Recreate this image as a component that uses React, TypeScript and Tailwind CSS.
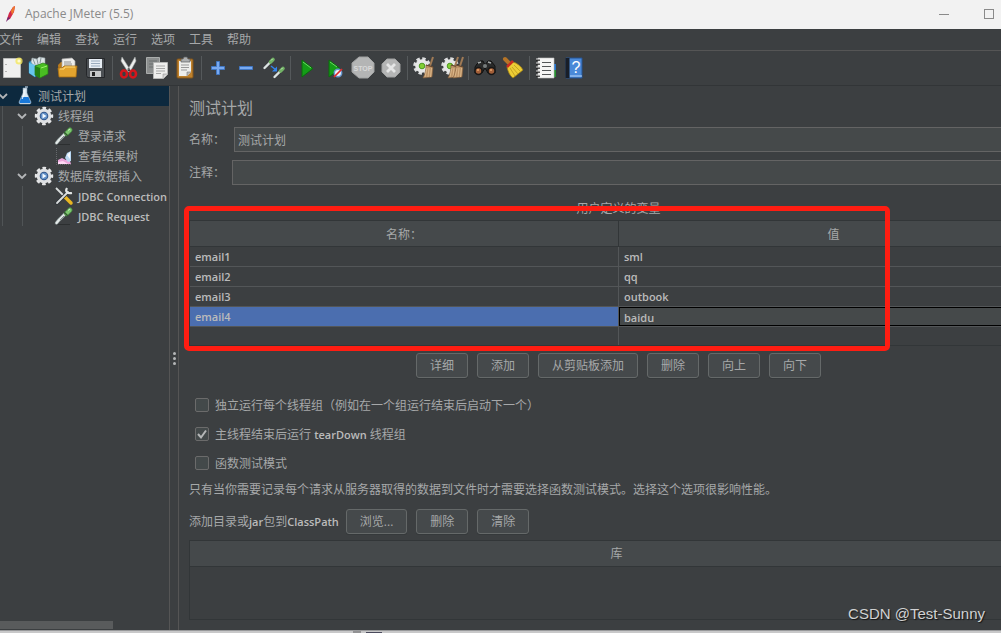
import React, { useState } from "react";

interface IconProps {
  children: React.ReactNode;
  size?: "sm" | "md";
}

function Icon({ children, size = "md" }: IconProps) {
  return size === "md" ? (
    <svg viewBox="0 0 24 24" className="w-6 h-6 shrink-0" fill="none">{children}</svg>
  ) : (
    <svg viewBox="0 0 20 20" className="w-5 h-5 shrink-0" fill="none">{children}</svg>
  );
}

/* Shared drawings */
function Pipette() {
  return (
    <>
      <path d="M3 18.500h13" stroke="#2c2f30" />
      <path d="M2.500 17l2.500-3L12 7" stroke="#8f9a9a" strokeWidth="3.400" strokeLinecap="round" />
      <path d="M2.500 17l2.500-3L12 7" stroke="#e3e9e8" strokeWidth="2" strokeLinecap="round" />
      <path d="M6 14l4-4" stroke="#7f8a89" />
      <path d="M12.500 7.500L16 4" stroke="#4b8f43" strokeWidth="5" strokeLinecap="round" />
      <path d="M12.500 7.500L16 4" stroke="#7cc66f" strokeWidth="3.200" strokeLinecap="round" />
      <path d="M10 6l4 4" stroke="#335a31" strokeWidth="1.200" />
      <path d="M14 4.500l2-1.500" stroke="#c8f0bf" />
    </>
  );
}

function Gear() {
  return (
    <>
      <circle cx="10" cy="10" r="7.500" stroke="#e4e5e6" strokeWidth="3.400" strokeDasharray="3.400 2.490" strokeDashoffset="1.700" />
      <circle cx="10" cy="10" r="7.300" fill="#dfe1e3" />
      <circle cx="10" cy="10" r="4.300" fill="#34588a" />
      <circle cx="10" cy="10" r="3.300" fill="#5f8ec6" />
      <path d="M8.500 7.500l4 2.500-4 2.500z" fill="#f2f8ff" />
    </>
  );
}

function Broom({ x = 0 }: { x?: number }) {
  return (
    <g transform={`translate(${x} 0)`}>
      <path d="M21 1l-3 9" stroke="#a07a55" strokeWidth="2" />
      <path d="M14 9l7 2-1 10-9 1c2-4 3-8 3-13z" fill="#bd9367" stroke="#7e5c3c" strokeWidth=".6" />
      <path d="M15 12l-2 9M17 12l-1 9M19.500 12l-1 9" stroke="#e2bf92" strokeWidth=".8" />
      <path d="M14 9l7 2" stroke="#62452d" />
    </g>
  );
}

function SmallGear() {
  return (
    <>
      <circle cx="10" cy="10" r="7" stroke="#dedfe0" strokeWidth="3.600" strokeDasharray="3.200 2.298" />
      <circle cx="10" cy="10" r="6.800" fill="#e6e7e7" />
      <circle cx="10" cy="10" r="2.800" fill="#82cf35" stroke="#4d9a21" />
    </>
  );
}

const toolGroups = [
  [
    {
      label: "新建",
      icon: (
        <>
          <path d="M3.500 2.500h17v19h-17z" fill="#f0f0ef" stroke="#b9bab9" />
          <path d="M6 8v1M6 15v1" stroke="#777" />
          <circle cx="19" cy="5" r="3.600" fill="#f5e95c" opacity=".8" />
          <circle cx="19" cy="5" r="1.600" fill="#fffbd0" />
        </>
      ),
    },
    {
      label: "模板",
      icon: (
        <>
          <path d="M1 6l6-3 4 3v12l-4 3-6-4z" fill="#3fa6d8" stroke="#1c6f9d" strokeWidth=".7" />
          <path d="M3 6l1-4 5 1 2-2 6 1v7H5z" fill="#dce4e6" stroke="#8a9699" strokeWidth=".6" />
          <path d="M5 3l2 5M9 3l1 5M13 2l-1 5" stroke="#88979b" />
          <path d="M1 7l6 2v12l-6-4z" fill="#68c5ed" />
          <path d="M7 10l8-3 5 2v9l-8 4-5-3z" fill="#49bd22" stroke="#237c12" strokeWidth=".7" />
          <path d="M7 10l5 2v10l-5-3z" fill="#247f14" />
          <path d="M13 12l6-2" stroke="#9df06d" />
        </>
      ),
    },
    {
      label: "打开",
      icon: (
        <>
          <path d="M2 9l3-3h4v13H3z" fill="#ba7b1d" />
          <path d="M6 3l10-1 3 3v10H6z" fill="#eeeeec" stroke="#aaa" strokeWidth=".7" />
          <path d="M8 6h7M8 8h8M8 10h8" stroke="#777" strokeWidth=".8" />
          <path d="M2 12h4l2-2h13l-1 11H3z" fill="#e3a42e" stroke="#a76d12" strokeWidth=".8" />
          <path d="M4 13h4l1-2h10" stroke="#ffdb7b" />
        </>
      ),
    },
    {
      label: "保存",
      icon: (
        <>
          <path d="M2.500 2.500h18v19h-17l-1-2z" fill="#4c5054" stroke="#25272a" />
          <path d="M5 3h13v9H5z" fill="#e7edf4" />
          <path d="M7 5h9M7 7.500h9M7 10h9" stroke="#8799ae" strokeWidth=".8" />
          <path d="M6 15h11v6H6z" fill="#c6c8c9" />
          <path d="M8 16h3v4H8z" fill="#222" />
        </>
      ),
    },
  ],
  [
    {
      label: "剪切",
      icon: (
        <>
          <path d="M5 1l9 14-3 1L4 5zM18 1l-8 14 3 1 6-11z" fill="#eceeed" stroke="#9fa3a3" strokeWidth=".6" />
          <circle cx="11.500" cy="13" r="1" fill="#666" />
          <ellipse cx="7" cy="18" rx="3" ry="3.500" stroke="#d4161c" strokeWidth="2.600" />
          <ellipse cx="16" cy="18" rx="3" ry="3.500" stroke="#d4161c" strokeWidth="2.600" />
        </>
      ),
    },
    {
      label: "复制",
      icon: (
        <>
          <path d="M1.500 1.500h13v16h-13z" fill="#8b8e8e" stroke="#aaadac" />
          <path d="M4 5h8M4 8h8M4 11h8" stroke="#6c7070" />
          <path d="M8.500 6.500h14v12l-4 4h-10z" fill="#eeeeed" stroke="#b5b6b5" />
          <path d="M11 10h9M11 12.500h9M11 15h9M11 17.500h5" stroke="#a6a7a6" />
          <path d="M18 22v-4h4" fill="#cfcfcf" stroke="#999" strokeWidth=".6" />
        </>
      ),
    },
    {
      label: "粘贴",
      icon: (
        <>
          <rect x="4" y="3" width="16" height="19" rx="1" fill="#be812c" stroke="#82551a" />
          <path d="M6 5h12v11l-4 4H6z" fill="#eeeeec" />
          <path d="M8 9h8M8 11.500h8M8 14h6" stroke="#999" />
          <path d="M14 20v-4h4" fill="#bbb" stroke="#777" strokeWidth=".6" />
          <path d="M8 6V3h2l1-2h3l1 2h2v3z" fill="#aeb0b1" stroke="#595c5e" strokeWidth=".7" />
        </>
      ),
    },
  ],
  [
    {
      label: "展开",
      icon: <path d="M10.500 5.500h3v5h5v3h-5v5h-3v-5h-5v-3h5z" fill="#79aaf0" stroke="#4177c3" />,
    },
    {
      label: "折叠",
      icon: <path d="M5.500 10.500h13v3h-13z" fill="#79aaf0" stroke="#4177c3" />,
    },
    {
      label: "切换",
      icon: (
        <>
          <path d="M2.500 12L8 6.500M12.500 21L18 15.500" stroke="#dce4e2" strokeWidth="2.400" strokeLinecap="round" />
          <path d="M8.500 6L11 3.500M18.500 15L21 12.500" stroke="#72b266" strokeWidth="3.600" strokeLinecap="round" />
          <path d="M9 4.500l1.500-1.500M19 13.500l1.500-1.500" stroke="#c4edbb" />
          <path d="M9 10l5 4" stroke="#3384ed" strokeWidth="1.500" />
          <path d="M15 10.500v5h-5z" fill="#3384ed" />
        </>
      ),
    },
  ],
  [
    {
      label: "启动",
      icon: (
        <>
          <path d="M7 4l11 8.500L7 21z" fill="#149d17" stroke="#0a6c0d" />
          <path d="M8 6l8 6" stroke="#6bd665" />
        </>
      ),
    },
    {
      label: "不停顿开始",
      icon: (
        <>
          <path d="M6 4l11 8.500L6 21z" fill="#149d17" stroke="#0a6c0d" />
          <path d="M7 6l7 5" stroke="#6bd665" />
          <circle cx="15" cy="17" r="3.700" fill="#ecf3fb" stroke="#6898cf" strokeWidth="1.500" />
          <path d="M11 21l8-8" stroke="#df2927" strokeWidth="1.700" />
        </>
      ),
    },
    {
      label: "停止",
      icon: (
        <>
          <path d="M8 1h9l6 6v9l-6 6H8l-7-6V7z" fill="#b4b5b5" stroke="#a0a2a2" />
          <text x="12" y="14.500" textAnchor="middle" fontSize="7" fontWeight="700" fill="#d8d9d9" fontFamily="Liberation Sans, sans-serif">STOP</text>
        </>
      ),
    },
    {
      label: "关闭",
      icon: (
        <>
          <path d="M8 3h8l5 5v8l-5 5H8l-5-5V8z" fill="#b4b5b5" stroke="#a0a2a2" />
          <path d="M8 8l8 8M16 8l-8 8" stroke="#e5e6e6" strokeWidth="2.800" />
        </>
      ),
    },
  ],
  [
    { label: "清除", icon: <><SmallGear /><Broom /></> },
    { label: "清除全部", icon: <><SmallGear /><Broom x={-3} /><Broom x={2} /></> },
  ],
  [
    {
      label: "搜索",
      icon: (
        <>
          <path d="M4 8l3-3h3l2 4 3-4h3l4 5v7h-7l-3-5-3 5H2v-6z" fill="#292a2a" stroke="#111" />
          <path d="M5 7l3-1M15 6l3 1" stroke="#a4a9a9" strokeWidth="1.500" />
          <circle cx="5.500" cy="15" r="3.500" fill="#a35f38" stroke="#171717" strokeWidth="1.500" />
          <circle cx="18.500" cy="15" r="3.500" fill="#a35f38" stroke="#171717" strokeWidth="1.500" />
          <path d="M4 14h2M17 14h2" stroke="#e8a66d" strokeWidth="1.500" />
          <circle cx="12" cy="10" r="2" fill="#777c7c" />
        </>
      ),
    },
    {
      label: "重置搜索",
      icon: (
        <>
          <path d="M4 3l4 4" stroke="#b57427" strokeWidth="4" strokeLinecap="round" />
          <path d="M6 11l6-5c4 1 8 4 10 8l-10 8c-3-2-5-6-6-11z" fill="#eccd35" stroke="#9e7d16" strokeWidth=".8" />
          <path d="M9 12l5 8M11 11l6 7M13 9l6 6" stroke="#c5a323" />
          <path d="M6 11l6-6" stroke="#c92c21" strokeWidth="2.600" />
        </>
      ),
    },
  ],
  [
    {
      label: "函数助手",
      icon: (
        <>
          <path d="M19 8h3v6h-3z" fill="#2472c9" />
          <path d="M19 14h3v7h-3z" fill="#279031" />
          <path d="M4 2h16v20H4z" fill="#f5f5f4" stroke="#c0c0c0" strokeWidth=".6" />
          <path d="M8 6.500h9M8 10.500h9M8 14.500h9M8 18.500h9" stroke="#535657" />
          <path d="M2 4h4M2 8h4M2 12h4M2 16h4M2 20h4" stroke="#222" strokeWidth="1.500" />
          <path d="M2 3h4M2 7h4M2 11h4M2 15h4M2 19h4" stroke="#ddd" />
        </>
      ),
    },
    {
      label: "帮助",
      icon: (
        <>
          <path d="M4 2h16v20H4z" fill="#4a89d8" stroke="#245391" />
          <path d="M3.500 2h4v20h-4z" fill="#181e28" />
          <path d="M8 20h12" stroke="#bad7fa" />
          <text x="14" y="17" textAnchor="middle" fontSize="16" fill="#fff" fontFamily="Liberation Sans, sans-serif">?</text>
        </>
      ),
    },
  ],
];

function Chevron() {
  return (
    <svg viewBox="0 0 12 12" className="w-3 h-3 shrink-0" fill="none">
      <path d="M2 4l4 4 4-4" stroke="#b4b6b8" strokeWidth="1.800" />
    </svg>
  );
}

interface LeafProps {
  icon: React.ReactNode;
  children: React.ReactNode;
}

function Leaf({ icon, children }: LeafProps) {
  return (
    <li className="h-5 pl-[31px] flex items-center gap-1 whitespace-nowrap">
      <Icon size="sm">{icon}</Icon>
      <span className="pt-0.5">{children}</span>
    </li>
  );
}

function Branch({ label, children }: { label: string; children: React.ReactNode }) {
  return (
    <li>
      <div className="h-5 pl-[13px] flex items-center">
        <Chevron />
        <span className="ml-1.5 mr-1 flex"><Icon size="sm"><Gear /></Icon></span>
        <span className="pt-0.5">{label}</span>
      </div>
      <ul className="ml-[19px] border-l border-[#505456]">{children}</ul>
    </li>
  );
}

function Latin({ children }: { children: React.ReactNode }) {
  return <span className="text-[11px] font-semibold text-[#bbbbbb]">{children}</span>;
}

function Button({ children }: { children: React.ReactNode }) {
  return (
    <button
      type="button"
      className="h-[25px] px-[13px] flex items-center border border-[#656969] rounded-[3px] bg-[#45494b] shadow-[0_1px_0_#35393b] whitespace-nowrap"
    >
      {children}
    </button>
  );
}

interface CheckProps {
  checked: boolean;
  onChange: (checked: boolean) => void;
  children: React.ReactNode;
}

function Check({ checked, onChange, children }: CheckProps) {
  return (
    <label className="h-[29px] pl-1.5 flex items-center gap-1.5">
      <span className="grid place-items-center pb-px">
        <input
          type="checkbox"
          checked={checked}
          onChange={(e) => onChange(e.target.checked)}
          className="col-start-1 row-start-1 appearance-none w-3.5 h-3.5 bg-[#43494a] border border-[#6b6b6b] rounded-xs"
        />
        {checked && (
          <svg viewBox="0 0 14 14" className="col-start-1 row-start-1 w-3.5 h-3.5 pointer-events-none" fill="none">
            <path d="M3 7l3 3.500L11 3.500" stroke="#b5b7b8" strokeWidth="2" />
          </svg>
        )}
      </span>
      <span>{children}</span>
    </label>
  );
}

const menus = ["文件", "编辑", "查找", "运行", "选项", "工具", "帮助"];

const variables = [
  { name: "email1", value: "sml" },
  { name: "email2", value: "qq" },
  { name: "email3", value: "outbook" },
];

export default function App() {
  const [planName, setPlanName] = useState("测试计划");
  const [comment, setComment] = useState("");
  const [editing, setEditing] = useState("baidu");
  const [serial, setSerial] = useState(false);
  const [tearDown, setTearDown] = useState(true);
  const [functional, setFunctional] = useState(false);

  return (
    <div className="relative min-h-screen w-full flex flex-col overflow-hidden bg-[#3c3f41] text-[#a6a8a9] text-[12px] leading-4 font-['Open_Sans','Noto_Sans_CJK_SC',sans-serif]">
      {/* Title bar */}
      <header className="h-[29px] pb-0.5 shrink-0 bg-[#f2f2f2] text-[#8a8a8a] flex items-center">
        <svg viewBox="0 0 16 20" className="w-4 h-5 ml-[3px] mr-1.5" fill="none">
          <path d="M3 18L6 9l4-6 2-1-1 6-4 7-3 1z" fill="#d22849" />
          <path d="M8 7l2-4 2-1-1 5-2 4z" fill="#ee792c" />
          <path d="M3 18l2-5 2 1-2 2z" fill="#6b2878" />
        </svg>
        <h1 className="flex-1">Apache JMeter (5.5)</h1>
        <button type="button" aria-label="最小化" className="px-[5px]">
          <svg viewBox="0 0 12 12" className="w-3 h-3"><path d="M1 6.500h10" stroke="#8a8a8a" /></svg>
        </button>
        <button type="button" aria-label="最大化" className="ml-7 pr-1.5">
          <svg viewBox="0 0 12 12" className="w-3 h-3" fill="none"><rect x="1.500" y="1.500" width="9" height="9" stroke="#8a8a8a" /></svg>
        </button>
      </header>

      <nav className="h-[22px] shrink-0 flex items-center gap-3.5 border-b border-[#555555]">
        {menus.map((menu) => (
          <button key={menu} type="button" className="first:-ml-px">{menu}</button>
        ))}
      </nav>

      {/* Toolbar */}
      <div className="h-[35px] shrink-0 -ml-0.5 flex items-center border-b border-[#323537]">
        {toolGroups.map((group, i) => (
          <div key={i} className="flex items-center">
            {i > 0 && <span className="w-px h-6 mx-0.5 bg-[#55595b]" />}
            {group.map((tool) => (
              <button key={tool.label} type="button" aria-label={tool.label} className="w-7 flex justify-center">
                <Icon>{tool.icon}</Icon>
              </button>
            ))}
          </div>
        ))}
      </div>

      <div className="flex-1 flex">
        {/* Test plan tree */}
        <aside className="w-[170px] shrink-0 flex flex-col justify-between overflow-hidden border-r border-[#555555]">
          <ul>
            <li>
              <div className="h-5 flex items-center bg-[#0d293e]">
                <span className="-ml-[3px] flex"><Chevron /></span>
                <span className="ml-1.5 mr-[3px] flex">
                  <Icon size="sm">
                    <path d="M8 2h4v5l4 9c0 2-1 2-2 2H6c-1 0-2 0-2-2l4-9z" fill="#dce9f2" stroke="#849bad" strokeWidth=".6" />
                    <path d="M6.500 11h7l2 5c0 1 0 1-2 1h-7c-2 0-2 0-2-1z" fill="#1978d8" />
                    <path d="M9 4v5l-2 4" stroke="#fff" />
                    <path d="M10 1h3" stroke="#d9e9f7" />
                  </Icon>
                </span>
                <span className="pt-0.5">测试计划</span>
              </div>
              <ul className="ml-0.5 border-l border-[#505456]">
                <Branch label="线程组">
                  <Leaf icon={<Pipette />}>登录请求</Leaf>
                  <Leaf
                    icon={
                      <>
                        <path d="M2.500 2v16.500h15" stroke="#66696c" strokeDasharray="1 1" />
                        <path d="M4 18v-4l4-2 4 2 3-2 2 6z" fill="#eba6dc" />
                        <path d="M4 18v-2l5-1 5 3z" fill="#ffd8f6" />
                        <path d="M11 12l2-5 4-2v10l-3 1z" fill="#b9d7f2" />
                        <path d="M13 9l3-3v7z" fill="#f6fbff" />
                      </>
                    }
                  >
                    查看结果树
                  </Leaf>
                </Branch>
                <Branch label="数据库数据插入">
                  <Leaf
                    icon={
                      <>
                        <path d="M2 2l9 9" stroke="#d9dddd" strokeWidth="1.800" />
                        <path d="M11 11l6 6" stroke="#e8b622" strokeWidth="3.500" strokeLinecap="round" />
                        <path d="M3 17L14 6" stroke="#30363a" strokeWidth="3.600" strokeLinecap="round" />
                        <path d="M3 17L14 6" stroke="#d9dcdd" strokeWidth="1.800" strokeLinecap="round" />
                        <path d="M13 2c-2 3 0 6 5 5" stroke="#e2e5e5" strokeWidth="2.200" />
                      </>
                    }
                  >
                    <Latin>JDBC Connection</Latin>
                  </Leaf>
                  <Leaf icon={<Pipette />}><Latin>JDBC Request</Latin></Leaf>
                </Branch>
              </ul>
            </li>
          </ul>
          <div className="w-2/3 h-2 mb-px bg-[#595b5c]" />
        </aside>

        {/* Splitter grip */}
        <div className="w-[9px] shrink-0 flex flex-col items-center justify-center gap-0.5 border-r border-[#555555]">
          <span className="w-[3px] h-[3px] rounded-full bg-[#b5b7b8]" />
          <span className="w-[3px] h-[3px] rounded-full bg-[#b5b7b8]" />
          <span className="w-[3px] h-[3px] rounded-full bg-[#b5b7b8]" />
        </div>

        <main className="flex-1 min-w-0 flex overflow-hidden pl-2.5">
          {/* The plan editor runs on past the right edge of the window */}
          <div className="flex-1 flex flex-col -mr-[47px] pt-3 pb-2.5">
            <h2 className="text-[16px] leading-5">测试计划</h2>

            <div className="mt-[9px] flex items-center">
              <label htmlFor="plan-name" className="w-[45px]">名称：</label>
              <input
                id="plan-name"
                value={planName}
                onChange={(e) => setPlanName(e.target.value)}
                className="flex-1 h-[25px] px-[3px] bg-[#45494a] border border-[#646464] outline-none"
              />
            </div>
            <div className="mt-2 flex items-center">
              <label htmlFor="plan-comment" className="w-[43px]">注释：</label>
              <input
                id="plan-comment"
                value={comment}
                onChange={(e) => setComment(e.target.value)}
                className="flex-1 h-[25px] px-[3px] bg-[#45494a] border border-[#646464] outline-none"
              />
            </div>

            <section className="relative mt-3.5">
              <h3 id="variables" className="h-[21px] pt-0.5 text-center">用户定义的变量</h3>
              <table aria-labelledby="variables" className="w-full table-fixed border-separate border-spacing-0 border-y border-l border-[#323638]">
                <thead>
                  <tr className="h-[26px] bg-[#45494b]">
                    <th className="w-[429px] px-0 pt-0.5 pb-0 font-normal border-b border-r border-[#323638]">名称：</th>
                    <th className="px-0 pt-0.5 pb-0 font-normal border-b border-[#323638]">值</th>
                  </tr>
                </thead>
                <tbody className="text-[11px] font-semibold text-[#bbbbbb]">
                  {variables.map((v) => (
                    <tr key={v.name} className="h-5">
                      <td className="py-0 px-[5px] border-b border-r border-[#535658]">{v.name}</td>
                      <td className="py-0 px-[5px] border-b border-[#535658]">{v.value}</td>
                    </tr>
                  ))}
                  <tr className="h-5">
                    <td className="py-0 px-[5px] bg-[#4b6eaf] border-b border-r border-[#535658]">email4</td>
                    <td className="p-0 border-b border-[#535658]">
                      <input
                        aria-label="值"
                        value={editing}
                        onChange={(e) => setEditing(e.target.value)}
                        className="block w-full h-[19px] px-1 pt-px bg-[#45494a] border border-black outline-none"
                      />
                    </td>
                  </tr>
                  <tr className="h-[18px]">
                    <td className="p-0 border-r border-[#535658]" />
                    <td className="p-0" />
                  </tr>
                </tbody>
              </table>
              {/* Highlight frame */}
              <div className="absolute top-[7px] -left-[5px] w-[706px] h-[145px] border-5 border-[#ff1d12] rounded-[5px] pointer-events-none" />
            </section>

            <div className="mt-[7px] flex justify-center gap-[9px]">
              <Button>详细</Button>
              <Button>添加</Button>
              <Button>从剪贴板添加</Button>
              <Button>删除</Button>
              <Button>向上</Button>
              <Button>向下</Button>
            </div>

            <div className="mt-[13px]">
              <Check checked={serial} onChange={setSerial}>独立运行每个线程组（例如在一个组运行结束后启动下一个）</Check>
              <Check checked={tearDown} onChange={setTearDown}>
                主线程结束后运行 <Latin>tearDown</Latin> 线程组
              </Check>
              <Check checked={functional} onChange={setFunctional}>函数测试模式</Check>
            </div>
            <p className="mt-1">只有当你需要记录每个请求从服务器取得的数据到文件时才需要选择函数测试模式。选择这个选项很影响性能。</p>

            <div className="mt-[11px] flex items-center gap-[9px]">
              <span className="-mr-0.5">
                添加目录或<Latin>jar</Latin>包到<Latin>ClassPath</Latin>
              </span>
              <Button>浏览...</Button>
              <Button>删除</Button>
              <Button>清除</Button>
            </div>

            <div className="mt-1.5 mr-1 flex-1 min-h-16 border border-[#323638]">
              <table className="w-full border-separate border-spacing-0">
                <thead>
                  <tr className="h-[26px] bg-[#45494b]">
                    <th className="p-0 font-normal border-b border-[#323638]">库</th>
                  </tr>
                </thead>
              </table>
            </div>
          </div>
        </main>
      </div>

      {/* Strip of the window behind */}
      <footer className="h-[3px] shrink-0 flex items-end bg-[#c8c8c9] border-t border-[#98999b] pl-[353px]">
        <span className="w-2 h-0.5 bg-[#929294]" />
        <span className="w-4 h-px ml-[5px] bg-[#4a4a5c]" />
      </footer>

      <div className="absolute right-4 bottom-[9px] text-[15px] leading-5 text-[#d0d1d2] font-['Liberation_Sans',sans-serif] [text-shadow:1px_1px_1px_#151515]">
        CSDN @Test-Sunny
      </div>
    </div>
  );
}
